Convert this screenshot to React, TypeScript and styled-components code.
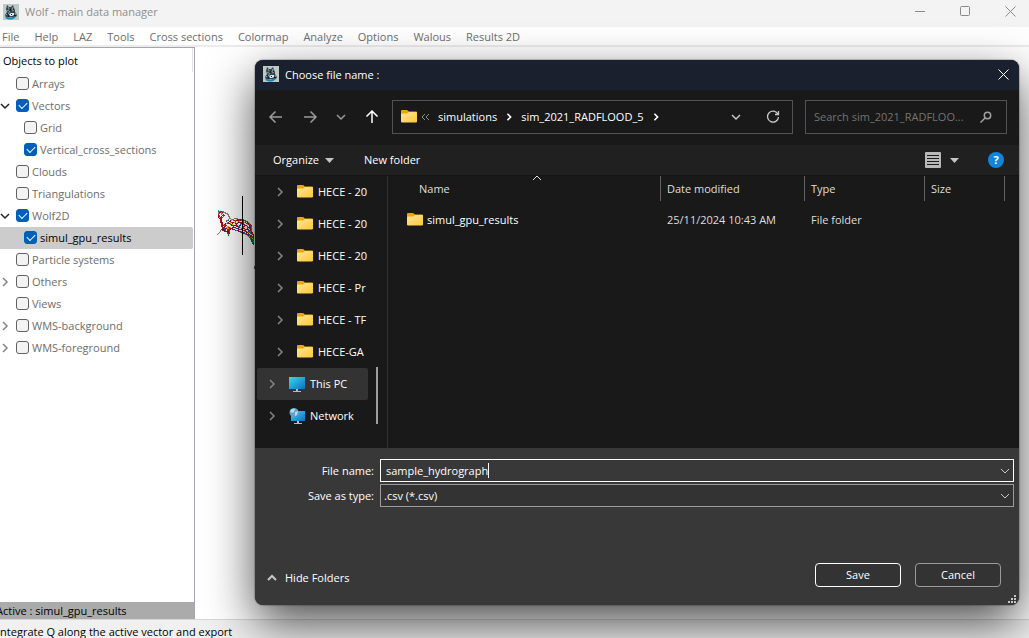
import React from 'react';
import styled, { createGlobalStyle, css } from 'styled-components';

const GlobalStyle = createGlobalStyle`
  * { box-sizing: border-box; }
  body { margin: 0; background: #fff; }
  body, button, input, select {
    font-family: 'Open Sans', 'Noto Sans', 'Segoe UI', sans-serif;
    font-size: 11px;
    line-height: 16px;
  }
  button { border: 0; padding: 0; background: none; color: inherit; }
  svg { display: block; flex: none; }
`;

const Window = styled.div`
  position: relative;
  display: flex;
  flex-direction: column;
  min-height: 100vh;
  overflow: hidden;
`;

const TitleBar = styled.header`
  display: flex;
  align-items: center;
  gap: 6px;
  height: 27px;
  padding: 0 13px 4px 3px;
  background: #f3f3f3;
  color: #8f8f8f;
`;

const WindowTitle = styled.h1`
  flex: 1;
  margin: 0;
  padding-top: 1px;
  font-size: 11px;
  font-weight: 400;
`;

const CaptionButtons = styled.div`
  display: flex;
  gap: 34px;
  color: #8a8a8a;
`;

const IconButton = styled.button`
  display: grid;
  place-items: center;
`;

const MenuBar = styled.nav`
  display: flex;
  gap: 15px;
  height: 20px;
  padding: 2px 2px 0;
  border-bottom: 2px solid #ececec;
  color: #6d6d6d;
`;

const MenuButton = styled.button`
  height: 16px;
  white-space: nowrap;
`;

const Workspace = styled.main`
  display: flex;
  flex: 1;
`;

const Sidebar = styled.aside`
  display: flex;
  flex-direction: column;
  width: 195px;
  border: solid #a5a5ac;
  border-width: 1px 1px 0 0;
`;

const SidebarHeader = styled.h2`
  margin: 0 1px 1px 0;
  padding: 5px 3px 3px;
  border-right: 1px solid #e2e2e2;
  font-size: 11px;
  font-weight: 400;
  color: #000;
`;

const ObjectTree = styled.ul`
  flex: 1;
  margin: 0;
  padding: 0;
  list-style: none;
`;

const ObjectRow = styled.li<{ $nested?: boolean; $selected?: boolean }>`
  display: flex;
  align-items: center;
  height: 22px;
  margin-right: 1px;
  padding-left: ${p => (p.$nested ? 8 : 0)}px;
  border-radius: 0 2px 2px 0;
  color: ${p => (p.$selected ? '#000' : '#6d6d6d')};
  background: ${p => (p.$selected ? '#cccccc' : 'transparent')};
`;

const Twisty = styled.span`
  display: flex;
  width: 16px;
`;

const ObjectLabel = styled.label`
  display: flex;
  align-items: center;
  gap: 3px;
`;

const CheckBox = styled.input`
  appearance: none;
  display: grid;
  place-items: center;
  width: 13px;
  height: 13px;
  margin: 0 0 1px;
  border: 1px solid #626262;
  border-radius: 3px;
  background: #f3f3f3;
  &:checked { border-color: #005fb8; background: #005fb8; }
  &:checked::before {
    content: '';
    width: 7px;
    height: 4px;
    margin-bottom: 2px;
    border: solid #fff;
    border-width: 0 0 1px 1px;
    transform: rotate(-45deg);
  }
`;

const ActiveStrip = styled.div`
  height: 17px;
  padding-top: 1px;
  overflow: hidden;
  background: #ababab;
  color: #000;
  white-space: nowrap;
  text-indent: -4px;
`;

const MapView = styled.section`
  flex: 1;
  padding: 149px 0 0 22px;
`;

const StatusBar = styled.footer`
  height: 19px;
  padding-top: 4px;
  border-top: 1px solid #d7d7d7;
  background: #f0f0f0;
  color: #000;
  text-indent: -3px;
`;

const Dialog = styled.section`
  position: absolute;
  inset: 60px 10px 33px 255px;
  display: flex;
  flex-direction: column;
  overflow: hidden;
  border-radius: 8px;
  background: #191919;
  color: #fff;
`;

const DialogShadow = styled.div`
  position: absolute;
  inset: 60px 10px 33px 255px;
  border-radius: 8px;
  box-shadow: 0 0 1px 1px rgba(0, 0, 0, 0.2), 0 18px 48px rgba(0, 0, 0, 0.7);
`;

const DialogTitleBar = styled.header`
  display: flex;
  align-items: center;
  gap: 6px;
  height: 30px;
  padding: 0 10px 2px 8px;
  background: #1b202f;
`;

const DialogTitle = styled.h2`
  flex: 1;
  margin: 0;
  padding-top: 2px;
  font-size: 11px;
  font-weight: 400;
`;

const NavigationRow = styled.div`
  display: flex;
  align-items: center;
  height: 55px;
  padding: 0 12px 1px 13px;
`;

const HistoryButtons = styled.div`
  display: flex;
  align-items: center;
  width: 124px;
  gap: 18px;
  color: #9a9a9a;
`;

const AddressBar = styled.div`
  display: flex;
  align-items: center;
  flex: 1;
  height: 34px;
  padding: 0 12px 0 8px;
  border: 1px solid #535353;
`;

const Crumbs = styled.div`
  display: flex;
  align-items: center;
  flex: 1;
  gap: 8px;
  padding-left: 4px;
`;

const AddressActions = styled.div`
  display: flex;
  align-items: center;
  gap: 25px;
  color: #c8c8c8;
`;

const SearchBox = styled.label`
  display: flex;
  align-items: center;
  width: 202px;
  height: 34px;
  margin-left: 12px;
  padding: 0 14px 0 8px;
  border: 1px solid #535353;
  color: #a0a0a0;
`;

const SearchInput = styled.input`
  flex: 1;
  min-width: 0;
  padding: 0;
  border: 0;
  outline: 0;
  background: none;
  color: #fff;
  &::placeholder { color: #737373; opacity: 1; }
`;

const CommandBar = styled.div`
  display: flex;
  align-items: center;
  height: 31px;
  padding: 0 15px 0 18px;
  background: #202020;
  border-bottom: 1px solid #141414;
`;

const CommandButton = styled.button`
  display: flex;
  align-items: center;
  gap: 6px;
  margin-right: 30px;
`;

const CommandSpacer = styled.span`
  flex: 1;
`;

const ViewButton = styled.button`
  display: flex;
  align-items: center;
  gap: 9px;
  margin-right: 29px;
`;

const HelpButton = styled.button`
  width: 16px;
  height: 16px;
  border-radius: 50%;
  background: #0f86db;
  font-weight: 700;
  line-height: 16px;
`;

const Browser = styled.div`
  display: flex;
  flex: 1;
  min-height: 0;
`;

const FolderPane = styled.div`
  display: flex;
  width: 133px;
  border-right: 1px solid #303030;
`;

const FolderTree = styled.ul`
  width: 113px;
  margin: 0;
  padding: 0 0 0 2px;
  overflow: hidden;
  list-style: none;
`;

const FolderRow = styled.li<{ $root?: boolean; $selected?: boolean }>`
  display: flex;
  align-items: center;
  gap: 5px;
  height: 32px;
  padding-left: ${p => (p.$root ? 10 : 18)}px;
  border-radius: 2px;
  overflow: hidden;
  white-space: nowrap;
  background: ${p => (p.$selected ? '#333333' : 'transparent')};
`;

const FolderTwisty = styled.span`
  flex: none;
  width: 17px;
  color: #858585;
`;

const ScrollTrack = styled.div`
  display: flex;
  align-items: flex-end;
  padding: 0 0 24px 8px;
`;

const ScrollThumb = styled.div`
  width: 2px;
  height: 57px;
  background: #9d9d9d;
`;

const FilePane = styled.div`
  flex: 1;
  padding-right: 14px;
`;

const FileTable = styled.table`
  width: 100%;
  table-layout: fixed;
  border-collapse: separate;
  border-spacing: 0;
`;

const HeadCell = styled.th<{ $width?: number; $first?: boolean }>`
  position: relative;
  width: ${p => (p.$width ? `${p.$width}px` : 'auto')};
  height: 25px;
  padding: 0 0 0 ${p => (p.$first ? 31 : 6)}px;
  border-right: 1px solid #636363;
  text-align: left;
  font-weight: 400;
  color: #dedede;
`;

const SortMark = styled.span`
  position: absolute;
  top: -3px;
  right: 118px;
`;

const FileCell = styled.td`
  height: 37px;
  padding: 0 0 0 6px;
  color: #dedede;
`;

const NameCell = styled(FileCell)`
  padding-left: 19px;
  color: #fff;
`;

const FileName = styled.span`
  display: flex;
  align-items: center;
  gap: 4px;
`;

const SavePanel = styled.form`
  display: flex;
  flex-direction: column;
  height: 157px;
  padding: 11px 5px 18px 12px;
  background: #383838;
`;

const Fields = styled.div`
  display: grid;
  grid-template-columns: 107px 1fr;
  gap: 2px 6px;
  align-items: center;
`;

const FieldLabel = styled.label`
  text-align: right;
`;

const comboFrame = css`
  display: flex;
  align-items: center;
  height: 23px;
`;

const NameCombo = styled.div`
  ${comboFrame}
  padding: 0 3px 0 5px;
  border: 1px solid #fff;
`;

const NameInput = styled.input`
  field-sizing: content;
  padding: 0;
  border: 0;
  outline: 0;
  background: none;
  color: #fff;
`;

const TextCaret = styled.span`
  width: 1px;
  height: 15px;
  background: #fff;
`;

const ComboSpacer = styled.span`
  flex: 1;
`;

const TypeCombo = styled.div`
  ${comboFrame}
  padding-right: 3px;
  border: 1px solid #9b9b9b;
  background: #333333;
`;

const TypeSelect = styled.select`
  appearance: none;
  flex: 1;
  padding: 0 0 0 3px;
  border: 0;
  outline: 0;
  background: none;
  color: #fff;
`;

const Actions = styled.div`
  display: flex;
  align-items: center;
  gap: 14px;
  margin-top: auto;
  padding-right: 13px;
`;

const HideButton = styled.button`
  display: flex;
  align-items: center;
  gap: 8px;
  margin: 6px auto 0 0;
`;

const ActionButton = styled.button<{ $primary?: boolean }>`
  width: 86px;
  height: 24px;
  border: 1px solid ${p => (p.$primary ? '#fff' : '#9b9b9b')};
  border-radius: 4px;
  background: #333333;
`;

const ResizeGrip = styled.svg`
  position: absolute;
  right: 3px;
  bottom: 2px;
`;

type Direction = 'up' | 'down' | 'left' | 'right';
const turns: Record<Direction, number> = { down: 0, left: 90, up: 180, right: 270 };

function Chevron({ dir, size = 10, color = 'currentColor', weight = 1.5 }: { dir: Direction; size?: number; color?: string; weight?: number }) {
  return (
    <svg width={size} height={size} viewBox="0 0 10 10" fill="none" stroke={color} strokeWidth={weight}>
      <path d="M1 3 5 7 9 3" transform={`rotate(${turns[dir]} 5 5)`} />
    </svg>
  );
}

function Arrow({ dir, color }: { dir: Direction; color?: string }) {
  return (
    <svg width="16" height="16" viewBox="-1 -1 16 16" fill="none" stroke={color || 'currentColor'} strokeWidth="1.500">
      <path d="M7 1V13M1.500 7.500 7 13 12.500 7.500" transform={`rotate(${turns[dir]} 7 7)`} />
    </svg>
  );
}

function Triangle() {
  return (
    <svg width="9" height="5" viewBox="0 0 9 5" fill="#c4c4c4"><path d="M0 0H9L4.500 5Z" /></svg>
  );
}

function Folder() {
  return (
    <svg width="16" height="16" viewBox="0 0 16 16">
      <defs>
        <linearGradient id="folderFront" x1="0" y1="0" x2="1" y2="1">
          <stop offset="0" stopColor="#ffe69b" />
          <stop offset="1" stopColor="#ffc937" />
        </linearGradient>
      </defs>
      <path d="M0 2Q0 1 1 1H6L8 2.500H15Q16 2.500 16 3.500V8H0Z" fill="#f0a30a" />
      <path d="M0 5.500Q0 4.500 1 4.500H6L8 3H15Q16 3 16 4V12.500Q16 13.500 15 13.500H1Q0 13.500 0 12.500Z" fill="url(#folderFront)" />
    </svg>
  );
}

function Monitor({ network }: { network?: boolean }) {
  return (
    <svg width="16" height="16" viewBox="0 0 16 16">
      <defs>
        <linearGradient id="screenFill" x1="0" y1="0" x2="1" y2="1">
          <stop offset="0" stopColor="#35dce6" />
          <stop offset="1" stopColor="#0b6fc4" />
        </linearGradient>
      </defs>
      {network ? (
        <>
          <rect x="2" y="3" width="14" height="10" fill="url(#screenFill)" />
          <path d="M8 13h2v2h3v1H5v-1h3z" fill="#b5bcc4" />
          <circle cx="5" cy="4.500" r="4.500" fill="#5fa3c6" />
          <path d="M1 3Q3 0 6 1L5 4 3 5ZM6 4 9 3 8 7 6 8Z" fill="#b5dcec" />
        </>
      ) : (
        <>
          <rect x="0" y="1" width="16" height="12" fill="url(#screenFill)" />
          <path d="M7 13h2v2h3v1H4v-1h3z" fill="#b5bcc4" />
        </>
      )}
    </svg>
  );
}

function WolfLogo() {
  return (
    <svg width="16" height="16" viewBox="0 0 16 16">
      <rect width="16" height="16" fill="#bccac4" />
      <path d="M4 1 6 3 8 3 10 1 11 4 12 6 12 8 14 11 13 13H3L2 11 4 8 3 5Z" fill="#35434f" />
      <path d="M5 3 6 5M10 3 9 6M4 7 6 6M5 10 7 7M11 6 9 7M3 11 5 9M12 9 13 11" stroke="#8da0aa" />
      <path d="M7 5h1v2h-1zM4 9h1v1h-1zM10 5h1v1h-1z" fill="#18222c" />
      <path d="M6 10 8 9 11 9 11 11 9 12 7 12Z" fill="#dfe8ea" />
      <path d="M8 10h1v1h-1zM5 11h1v2h-1zM11 11h2v1h-2z" fill="#101a24" />
      <path d="M2 12 4 13 8 13.500 13 12 12 14 9 15.500H6L3 14.500Z" fill="#1f83b5" />
    </svg>
  );
}

const traceColors: Record<string, string> = {
  g: '#808080', r: '#b01010', d: '#7a1010', b: '#1464c8', y: '#f0b800', n: '#1e8c32', c: '#28b4dc', w: '#ffffff', o: '#e06010',
};

const traceRows = [
  ' c                                   ',
  ' bgrrgg                              ',
  ' grrgrggg                            ',
  ' gbwggwwggg                          ',
  ' rwwgwrwwwgg                         ',
  ' rnwwrbrwwwg                         ',
  ' rrwrwgwwwwgg                        ',
  ' ryrrbwwwwwwg                        ',
  '  rrrwwwwwwwgg   gggg                ',
  '   rrwwwwwwgwwgggwwyrrrdnnn          ',
  '   rrwwwwgnbwrywbrgrrrndnrrnn        ',
  '   rrwwwwbwwrrwwwwrwwrywwnbwrnn      ',
  '   rdrwwwwgrwybrrygwyrbrrwnynwrg     ',
  '    rrwwryrrrgwrwwrbrwwnrwrwwrbrn    ',
  '    rryrrwwwwnrywwyrwwwbyrrrwwyrnr   ',
  '    rrrnrbwwwwrrbrrbnwrrwwwbrrwwrnr  ',
  '    rrwrrwyywwwwrwwrrbnwwwrrwwrwrbn  ',
  '     rrrwyybrywrbrrwwrrywrbwwwnrrrg  ',
  '     rrbrryyrrrrwwybrrwwnrrrwwrwnrg  ',
  '    rddrrwrrnd rrrwwwrrbrwwyrnrrwrn  ',
  '   g rrdnwrrr     rgrrwwwrnrrwwbrrg  ',
  '   g   rrrddb        rrrgwwyrrwrngr  ',
  '  g       rrr          grrrbwrrynbrr ',
  ' g        brr             rrgrwrwnrr ',
  'g          n                grrbrwyrr',
  '           r                  grnrrwr',
  '                               gyrrnr',
  '                                rngrr',
  '                                 nryr',
  '                                 grrn',
  '                                  rbr',
  '                                  rrg',
  '                                   nr',
  '                                   rr',
  '                                    n',
];

function RiverTrace() {
  return (
    <svg width="40" height="78" viewBox="0 0 40 78" shapeRendering="crispEdges">
      {traceRows.map((row, y) =>
        [...row].map((c, x) => (c === ' ' ? null : <rect key={`${x}-${y}`} x={x} y={y + 14} width="1" height="1" fill={traceColors[c]} />)),
      )}
      <rect x="25" y="0" width="1" height="59" fill="#000" />
      <rect x="37" y="70" width="1" height="3" fill="#7a5a40" />
    </svg>
  );
}

const menus = ['File', 'Help', 'LAZ', 'Tools', 'Cross sections', 'Colormap', 'Analyze', 'Options', 'Walous', 'Results 2D'];

interface TreeObject { name: string; checked?: boolean; nested?: boolean; selected?: boolean; state?: 'open' | 'closed' }

const objects: TreeObject[] = [
  { name: 'Arrays' },
  { name: 'Vectors', checked: true, state: 'open' },
  { name: 'Grid', nested: true },
  { name: 'Vertical_cross_sections', checked: true, nested: true },
  { name: 'Clouds' },
  { name: 'Triangulations' },
  { name: 'Wolf2D', checked: true, state: 'open' },
  { name: 'simul_gpu_results', checked: true, nested: true, selected: true },
  { name: 'Particle systems' },
  { name: 'Others', state: 'closed' },
  { name: 'Views' },
  { name: 'WMS-background', state: 'closed' },
  { name: 'WMS-foreground', state: 'closed' },
];

const folders = ['HECE - 20', 'HECE - 20', 'HECE - 20', 'HECE - Pr', 'HECE - TF', 'HECE-GA'];

export default function App() {
  return (
    <Window>
      <GlobalStyle />
      <TitleBar>
        <WolfLogo />
        <WindowTitle>Wolf - main data manager</WindowTitle>
        <CaptionButtons>
          <IconButton aria-label="Minimize">
            <svg width="11" height="11" stroke="currentColor"><path d="M0 5.500H10" /></svg>
          </IconButton>
          <IconButton aria-label="Maximize">
            <svg width="11" height="11" stroke="currentColor" fill="none"><rect x=".5" y=".5" width="9" height="9" rx="1" /></svg>
          </IconButton>
          <IconButton aria-label="Close">
            <svg width="11" height="11" stroke="currentColor"><path d="M.5 .5 10.500 10.500M10.500 .5 .5 10.500" /></svg>
          </IconButton>
        </CaptionButtons>
      </TitleBar>
      <MenuBar>
        {menus.map(m => <MenuButton key={m}>{m}</MenuButton>)}
      </MenuBar>
      <Workspace>
        <Sidebar>
          <SidebarHeader>Objects to plot</SidebarHeader>
          <ObjectTree>
            {objects.map(o => (
              <ObjectRow key={o.name} $nested={o.nested} $selected={o.selected}>
                <Twisty>
                  {o.state === 'open' && <Chevron dir="down" color="#222" />}
                  {o.state === 'closed' && <Chevron dir="right" color="#858585" />}
                </Twisty>
                <ObjectLabel>
                  <CheckBox type="checkbox" defaultChecked={o.checked} />
                  {o.name}
                </ObjectLabel>
              </ObjectRow>
            ))}
          </ObjectTree>
          <ActiveStrip>Active : simul_gpu_results</ActiveStrip>
        </Sidebar>
        <MapView>
          <RiverTrace />
        </MapView>
      </Workspace>
      <StatusBar>Integrate Q along the active vector and export</StatusBar>
      <DialogShadow />
      <Dialog role="dialog" aria-label="Choose file name">
        <DialogTitleBar>
          <WolfLogo />
          <DialogTitle>Choose file name :</DialogTitle>
          <IconButton aria-label="Close dialog">
            <svg width="11" height="11" stroke="#fff"><path d="M.5 .5 10.500 10.500M10.500 .5 .5 10.500" /></svg>
          </IconButton>
        </DialogTitleBar>
        <NavigationRow>
          <HistoryButtons>
            <IconButton aria-label="Back"><Arrow dir="left" /></IconButton>
            <IconButton aria-label="Forward"><Arrow dir="right" /></IconButton>
            <IconButton aria-label="Recent locations"><Chevron dir="down" /></IconButton>
            <IconButton aria-label="Up"><Arrow dir="up" color="#fff" /></IconButton>
          </HistoryButtons>
          <AddressBar>
            <Folder />
            <Crumbs>
              <svg width="9" height="8" viewBox="0 0 9 8" fill="none" stroke="#8a8a8a"><path d="M4 1 1 4 4 7M8 1 5 4 8 7" /></svg>
              <button>simulations</button>
              <Chevron dir="right" size={8} weight={2} />
              <button>sim_2021_RADFLOOD_5</button>
              <Chevron dir="right" size={8} weight={2} />
            </Crumbs>
            <AddressActions>
              <IconButton aria-label="Previous locations"><Chevron dir="down" /></IconButton>
              <IconButton aria-label="Refresh">
                <svg width="14" height="14" viewBox="0 0 14 14" fill="none" stroke="currentColor" strokeWidth="1.300">
                  <path d="M12 4.300A5.500 5.500 0 1 0 12.500 7M12.500 1V4.500H9" />
                </svg>
              </IconButton>
            </AddressActions>
          </AddressBar>
          <SearchBox>
            <SearchInput aria-label="Search" placeholder="Search sim_2021_RADFLOO..." />
            <svg width="12" height="12" viewBox="0 0 12 12" fill="none" stroke="currentColor" strokeWidth="1.500">
              <circle cx="7.500" cy="4.500" r="3.200" /><path d="M5 7 .5 11.500" />
            </svg>
          </SearchBox>
        </NavigationRow>
        <CommandBar>
          <CommandButton>Organize <Triangle /></CommandButton>
          <CommandButton>New folder</CommandButton>
          <CommandSpacer />
          <ViewButton aria-label="Change view">
            <svg width="16" height="16" viewBox="0 0 16 16">
              <rect width="16" height="16" rx="1" fill="#b8b8b8" />
              <path d="M2 3.500H14M2 6.500H14M2 9.500H14M2 12.500H14" stroke="#1a1a1a" />
            </svg>
            <Triangle />
          </ViewButton>
          <HelpButton aria-label="Help">?</HelpButton>
        </CommandBar>
        <Browser>
          <FolderPane>
            <FolderTree>
              {folders.map((f, i) => (
                <FolderRow key={i}>
                  <FolderTwisty><Chevron dir="right" /></FolderTwisty>
                  <Folder />
                  {f}
                </FolderRow>
              ))}
              <FolderRow $root $selected>
                <FolderTwisty><Chevron dir="right" /></FolderTwisty>
                <Monitor />
                This PC
              </FolderRow>
              <FolderRow $root>
                <FolderTwisty><Chevron dir="right" /></FolderTwisty>
                <Monitor network />
                Network
              </FolderRow>
            </FolderTree>
            <ScrollTrack><ScrollThumb /></ScrollTrack>
          </FolderPane>
          <FilePane>
            <FileTable>
              <thead>
                <tr>
                  <HeadCell $first>Name<SortMark><Chevron dir="up" weight={1} /></SortMark></HeadCell>
                  <HeadCell $width={144}>Date modified</HeadCell>
                  <HeadCell $width={120}>Type</HeadCell>
                  <HeadCell $width={80}>Size</HeadCell>
                </tr>
              </thead>
              <tbody>
                <tr>
                  <NameCell><FileName><Folder />simul_gpu_results</FileName></NameCell>
                  <FileCell>25/11/2024 10:43 AM</FileCell>
                  <FileCell>File folder</FileCell>
                  <FileCell />
                </tr>
              </tbody>
            </FileTable>
          </FilePane>
        </Browser>
        <SavePanel onSubmit={e => e.preventDefault()}>
          <Fields>
            <FieldLabel htmlFor="file-name">File name:</FieldLabel>
            <NameCombo>
              <NameInput id="file-name" defaultValue="sample_hydrograph" />
              <TextCaret />
              <ComboSpacer />
              <Chevron dir="down" weight={1} color="#c8c8c8" />
            </NameCombo>
            <FieldLabel htmlFor="file-type">Save as type:</FieldLabel>
            <TypeCombo>
              <TypeSelect id="file-type"><option>.csv (*.csv)</option></TypeSelect>
              <Chevron dir="down" weight={1} color="#c8c8c8" />
            </TypeCombo>
          </Fields>
          <Actions>
            <HideButton type="button"><Chevron dir="up" weight={2} color="#c8c8c8" />Hide Folders</HideButton>
            <ActionButton type="submit" $primary>Save</ActionButton>
            <ActionButton type="button">Cancel</ActionButton>
          </Actions>
        </SavePanel>
        <ResizeGrip width="8" height="8" fill="#c4c4c4">
          <path d="M6 0h2v2H6zM3 3h2v2H3zM6 3h2v2H6zM0 6h2v2H0zM3 6h2v2H3zM6 6h2v2H6z" />
        </ResizeGrip>
      </Dialog>
    </Window>
  );
}
